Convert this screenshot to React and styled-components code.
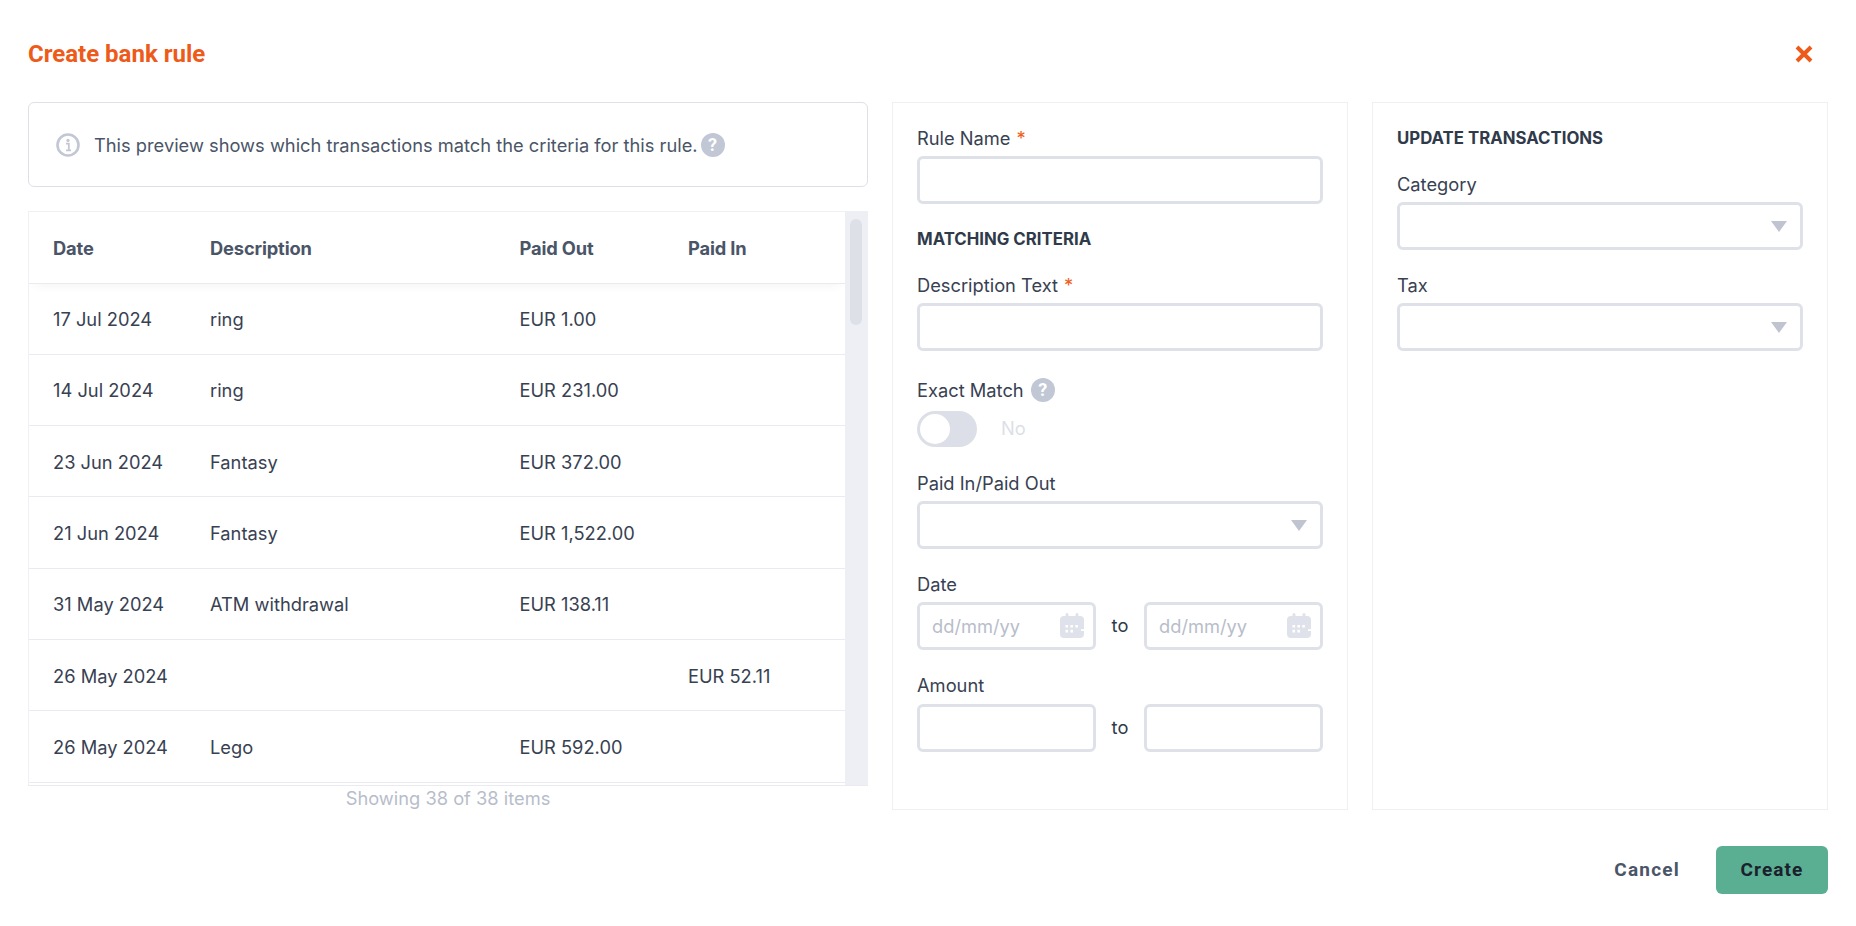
import React from "react";
import styled, { createGlobalStyle } from "styled-components";

const Global = createGlobalStyle`
  html, body { margin: 0; padding: 0; background: #fff; }
  * { box-sizing: border-box; }
  body { font-family: Inter, "Liberation Sans", sans-serif; color: #384152; }
`;

const Page = styled.div`
  width: 1856px;
  height: 926px;
  padding: 0 28px;
  overflow: hidden;
  display: flex;
  flex-direction: column;
`;
const Header = styled.header`
  height: 102px;
  padding-top: 6px;
  display: flex;
  align-items: center;
  justify-content: space-between;
`;
const Title = styled.h1`
  margin: 0;
  font: 700 24px/28px Roboto, sans-serif;
  color: #ee5a1a;
`;
const Close = styled.button`
  border: 0;
  padding: 0;
  background: none;
  width: 24px;
  height: 24px;
  margin-right: 12px;
  display: flex;
  align-items: center;
  justify-content: center;
`;
const Columns = styled.div`
  display: flex;
  gap: 24px;
  height: 708px;
`;
const PreviewColumn = styled.section`
  width: 840px;
  display: flex;
  flex-direction: column;
`;
const InfoBox = styled.div`
  height: 86px;
  border: 1px solid #dde0e7;
  border-radius: 6px;
  padding: 0 0 0 27px;
  display: flex;
  align-items: center;
  font: 400 18.3px/24px Inter, sans-serif;
  color: #4a5568;
`;
const InfoText = styled.span`
  margin: 0 3px 0 14px;
`;
const TableFrame = styled.div`
  margin-top: 24px;
  height: 575px;
  flex: none;
  display: flex;
  border-top: 1px solid #eef0f4;
  border-bottom: 1px solid #e9ebf0;
`;
const TableBody = styled.div`
  flex: 1;
  min-width: 0;
  overflow: hidden;
  border-left: 1px solid #eef0f4;
`;
const Row = styled.div`
  display: grid;
  grid-template-columns: 157px 309.5px 168.5px 1fr;
  align-items: center;
  height: ${(p) => (p.$head ? "71.5px" : "71.33px")};
  padding: ${(p) => (p.$head ? 2 : 1)}px 0 0 24px;
  border-bottom: 1px solid #e9ebf0;
  font: ${(p) => (p.$head ? 700 : 400)} 18.3px/24px Inter, sans-serif;
  letter-spacing: ${(p) => (p.$head ? "-0.15px" : "0")};
  color: ${(p) => (p.$head ? "#4a5568" : "#384152")};
  box-shadow: ${(p) => (p.$head ? "0 6px 10px -6px rgba(60,70,90,.08)" : "none")};
  position: relative;
`;
const Track = styled.div`
  width: 23px;
  flex: none;
  background: #eeeff4;
  padding: 7px 5px;
`;
const Thumb = styled.div`
  width: 12px;
  height: 106px;
  border-radius: 6px;
  background: #dde0e6;
`;
const Showing = styled.div`
  text-align: center;
  font: 400 18.3px/24px Inter, sans-serif;
  color: #b8bdca;
`;
const Panel = styled.section`
  width: 456px;
  border: 1px solid #eff0f4;
  padding: 0 24px;
`;
const Label = styled.label`
  display: flex;
  align-items: center;
  height: 24px;
  margin: ${(p) => p.$mt || 0}px 0 ${(p) => (p.$mb === undefined ? 6 : p.$mb)}px;
  font: 400 18.3px/24px Inter, sans-serif;
  color: #384152;
`;
const Star = styled.span`
  color: #f0601c;
  margin-left: 6px;
`;
const Heading = styled.h2`
  margin: ${(p) => p.$mt}px 0 ${(p) => p.$mb}px;
  font: 700 16.8px/24px Inter, sans-serif;
  color: #2f3a4a;
`;
const Input = styled.div`
  height: 48px;
  flex: ${(p) => (p.$half ? "1 1 0" : "none")};
  border: 3px solid #dee1e8;
  border-radius: 6px;
  background: #fff;
  display: flex;
  align-items: center;
  justify-content: space-between;
  padding: 0 9px 0 12px;
`;
const Placeholder = styled.span`
  font: 400 18.3px/24px Inter, sans-serif;
  color: #b8bdca;
`;
const Caret = styled.i`
  width: 0;
  height: 0;
  margin: 1px 4px 0 0;
  border-left: 8px solid transparent;
  border-right: 8px solid transparent;
  border-top: 11px solid #bfc4d0;
`;
const Pair = styled.div`
  display: flex;
  align-items: center;
`;
const To = styled.span`
  width: 48px;
  margin-top: -2px;
  text-align: center;
  font: 400 18.3px/24px Inter, sans-serif;
  color: #2f3a4a;
`;
const ToggleRow = styled.div`
  display: flex;
  align-items: center;
`;
const Toggle = styled.div`
  width: 60px;
  height: 36px;
  border-radius: 18px;
  background: #dcdfe7;
  padding: 3px;
`;
const Knob = styled.div`
  width: 30px;
  height: 30px;
  border-radius: 50%;
  background: #fff;
`;
const ToggleText = styled.span`
  margin: -2px 0 0 24px;
  font: 400 18.3px/24px Inter, sans-serif;
  color: #dcdfe7;
`;
const Footer = styled.footer`
  margin-top: 36px;
  display: flex;
  justify-content: flex-end;
  align-items: center;
`;
const Cancel = styled.button`
  border: 0;
  background: none;
  padding: 0;
  margin-right: 36px;
  font: 700 19px/24px Roboto, sans-serif;
  letter-spacing: 1.2px;
  color: #4a5568;
`;
const Create = styled.button`
  width: 112px;
  height: 48px;
  border: 0;
  border-radius: 6px;
  background: #5aae92;
  font: 700 19px/24px Roboto, sans-serif;
  letter-spacing: 1.1px;
  color: #1a202c;
`;
const HelpDot = styled.span`
  width: 24px;
  height: 24px;
  border-radius: 50%;
  background: #c1c7d4;
  color: #fff;
  font: 700 18px/24px Roboto, sans-serif;
  text-align: center;
  flex: none;
  margin-left: ${(p) => p.$ml || 0}px;
`;

const InfoIcon = () => (
  <svg width="24" height="24" viewBox="0 0 24 24" fill="none">
    <circle cx="12" cy="12" r="10.5" stroke="#c1c7d4" strokeWidth="2.6" />
    <circle cx="12" cy="7.4" r="1.6" fill="#c1c7d4" />
    <path d="M10 10.6h2.8v6.6M10 17.4h5" stroke="#c1c7d4" strokeWidth="1.8" />
  </svg>
);
const CloseIcon = () => (
  <svg width="18" height="18" viewBox="0 0 18 18">
    <path d="M2 2l14 14M16 2L2 16" stroke="#ee5a1a" strokeWidth="4" strokeLinecap="butt" />
  </svg>
);
const CalendarIcon = () => (
  <svg width="24" height="26" viewBox="0 0 24 26">
    <path
      d="M5.5 1.6a1.5 1.5 0 0 1 3 0V3h7V1.6a1.5 1.5 0 0 1 3 0V3H20a4 4 0 0 1 4 4v14a4 4 0 0 1-4 4H4a4 4 0 0 1-4-4V7a4 4 0 0 1 4-4h1.5z"
      fill="#dfe2ea"
    />
    <path d="M21 16.2h3v1.8h-3z" fill="#fff" />
    <path d="M5.5 12h2.6v2.6H5.5zM10.4 12H13v2.6h-2.6zM15.3 12h2.6v2.6h-2.6zM5.5 16.8h2.6v2.6H5.5zM10.4 16.8H13v2.6h-2.6z" fill="#fff" />
  </svg>
);

const rows = [
  ["17 Jul 2024", "ring", "EUR 1.00", ""],
  ["14 Jul 2024", "ring", "EUR 231.00", ""],
  ["23 Jun 2024", "Fantasy", "EUR 372.00", ""],
  ["21 Jun 2024", "Fantasy", "EUR 1,522.00", ""],
  ["31 May 2024", "ATM withdrawal", "EUR 138.11", ""],
  ["26 May 2024", "", "", "EUR 52.11"],
  ["26 May 2024", "Lego", "EUR 592.00", ""],
  ["", "", "", ""],
];

const Select = () => (
  <Input>
    <span />
    <Caret />
  </Input>
);
const DateInput = () => (
  <Input $half>
    <Placeholder>dd/mm/yy</Placeholder>
    <CalendarIcon />
  </Input>
);

export default function App() {
  return (
    <Page>
      <Global />
      <Header>
        <Title>Create bank rule</Title>
        <Close aria-label="Close">
          <CloseIcon />
        </Close>
      </Header>
      <Columns>
        <PreviewColumn>
          <InfoBox>
            <InfoIcon />
            <InfoText>This preview shows which transactions match the criteria for this rule.</InfoText>
            <HelpDot>?</HelpDot>
          </InfoBox>
          <TableFrame>
            <TableBody>
              <Row $head>
                <span>Date</span>
                <span>Description</span>
                <span>Paid Out</span>
                <span>Paid In</span>
              </Row>
              {rows.map((r, i) => (
                <Row key={i}>
                  {r.map((c, j) => (
                    <span key={j}>{c}</span>
                  ))}
                </Row>
              ))}
            </TableBody>
            <Track>
              <Thumb />
            </Track>
          </TableFrame>
          <Showing>Showing 38 of 38 items</Showing>
        </PreviewColumn>
        <Panel>
          <Label $mt={23}>
            Rule Name<Star>*</Star>
          </Label>
          <Input />
          <Heading $mt={23} $mb={22}>MATCHING CRITERIA</Heading>
          <Label>
            Description Text<Star>*</Star>
          </Label>
          <Input />
          <Label $mt={27} $mb={9}>
            Exact Match
            <HelpDot $ml={7}>?</HelpDot>
          </Label>
          <ToggleRow>
            <Toggle>
              <Knob />
            </Toggle>
            <ToggleText>No</ToggleText>
          </ToggleRow>
          <Label $mt={24}>Paid In/Paid Out</Label>
          <Select />
          <Label $mt={23}>Date</Label>
          <Pair>
            <DateInput />
            <To>to</To>
            <DateInput />
          </Pair>
          <Label $mt={23} $mb={7}>Amount</Label>
          <Pair>
            <Input $half />
            <To>to</To>
            <Input $half />
          </Pair>
        </Panel>
        <Panel>
          <Heading $mt={23} $mb={22}>UPDATE TRANSACTIONS</Heading>
          <Label>Category</Label>
          <Select />
          <Label $mt={23}>Tax</Label>
          <Select />
        </Panel>
      </Columns>
      <Footer>
        <Cancel>Cancel</Cancel>
        <Create>Create</Create>
      </Footer>
    </Page>
  );
}
